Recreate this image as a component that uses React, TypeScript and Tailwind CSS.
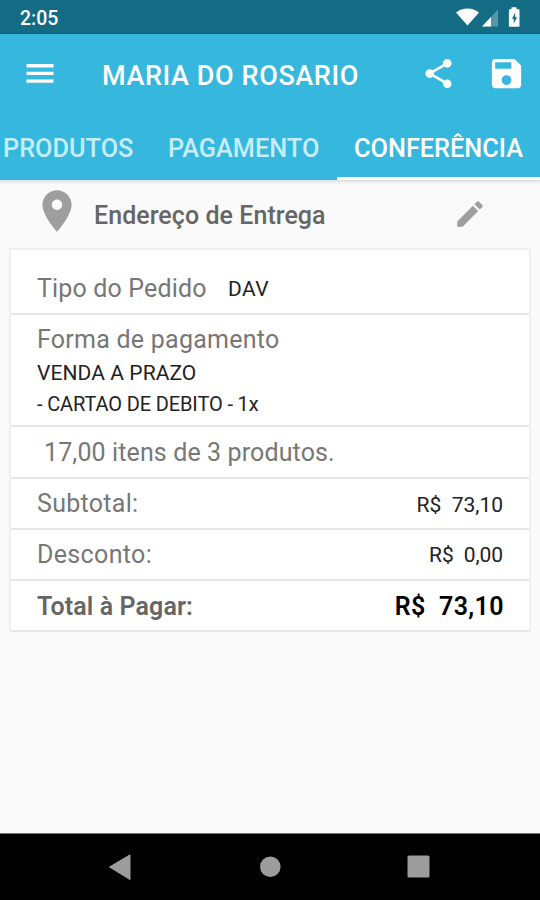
import type { ReactNode } from "react";

function Icon({ d, className }: { d: string; className: string }) {
  return (
    <svg viewBox="0 0 24 24" fill="currentColor" className={"shrink-0 " + className}>
      <path d={d} />
    </svg>
  );
}

const MENU = "M3 17.9h18v-2.2H3v2.2zm0-5.2h18v-2.2H3v2.2zm0-7.3v2.2h18V5.4H3z";
const SHARE =
  "M18 16.08c-.76 0-1.44.3-1.96.77L8.91 12.7c.05-.23.09-.46.09-.7s-.04-.47-.09-.7l7.05-4.11c.54.5 1.25.81 2.04.81 1.66 0 3-1.34 3-3s-1.34-3-3-3-3 1.34-3 3c0 .24.04.47.09.7L8.04 9.81C7.5 9.31 6.79 9 6 9c-1.66 0-3 1.34-3 3s1.34 3 3 3c.79 0 1.5-.31 2.04-.81l7.12 4.16c-.05.21-.08.43-.08.65 0 1.61 1.31 2.92 2.92 2.92s2.92-1.31 2.92-2.92-1.31-2.92-2.92-2.92z";
const SAVE =
  "M17 3H5c-1.11 0-2 .9-2 2v14c0 1.1.89 2 2 2h14c1.1 0 2-.9 2-2V7l-4-4zm-5 16c-1.66 0-3-1.34-3-3s1.34-3 3-3 3 1.34 3 3-1.34 3-3 3zm3-10H5V5h10v4z";
const PLACE =
  "M12 2C8.13 2 5 5.13 5 9c0 5.25 7 13 7 13s7-7.75 7-13c0-3.87-3.13-7-7-7zm0 9.5c-1.38 0-2.5-1.12-2.5-2.5s1.12-2.5 2.5-2.5 2.5 1.12 2.5 2.5-1.12 2.5-2.5 2.5z";
const EDIT =
  "M3 17.25V21h3.75L17.81 9.94l-3.75-3.75L3 17.25zM20.71 7.04c.39-.39.39-1.02 0-1.41l-2.34-2.34c-.39-.39-1.02-.39-1.41 0l-1.83 1.83 3.75 3.75 1.83-1.83z";

function StatusBar() {
  return (
    <div className="flex h-[34px] items-start justify-between border-b border-[#0c6079] bg-[#146b84] pl-5 text-white">
      <span className="mt-[7px] text-[19.5px] leading-6 font-medium">2:05</span>
      <svg viewBox="0 0 85 34" className="h-[34px] w-[85px] shrink-0">
        <path d="M1 12.6C7.6 7 17.4 7 24 12.6L12.5 25.6z" fill="#fff" />
        <path d="M43 9.5v17H27z" fill="#5797a9" />
        <path d="M36 17v9.5h-9z" fill="#fff" />
        <path d="M56.5 7.2h5v2h2.2q.8 0 .8.8v16q0 .8-.8.8h-9q-.8 0-.8-.8V10q0-.8.8-.8h1.8z" fill="#fff" />
        <path d="M60.2 12.5l-3.2 6.2h1.8v4.8l3.2-6.2h-1.8z" fill="#146b84" />
      </svg>
    </div>
  );
}

function Toolbar() {
  return (
    <div className="flex h-[79px] items-center pl-[22px] text-white">
      <Icon d={MENU} className="h-9 w-9" />
      <h1 className="ml-11 w-[319px] pt-[4px] text-[27px] leading-8 font-medium tracking-[0.6px] whitespace-nowrap">
        MARIA DO ROSARIO
      </h1>
      <Icon d={SHARE} className="h-[35px] w-[35px]" />
      <Icon d={SAVE} className="ml-[31px] h-[39px] w-[39px]" />
    </div>
  );
}

function Tabs() {
  return (
    <div className="flex h-[67px] text-[25.3px] leading-8 font-medium whitespace-nowrap text-[#c5edfb]">
      <div className="w-[151px] pt-5 pl-[3px]">PRODUTOS</div>
      <div className="w-[186px] pt-5 pl-[17px]">PAGAMENTO</div>
      <div className="w-[203px] border-b-[3px] border-white pt-5 pl-[17px] text-white">CONFERÊNCIA</div>
    </div>
  );
}

function Row({ className, children }: { className: string; children: ReactNode }) {
  return (
    <div className={"flex items-center justify-between border-b-2 border-[#e8e7e8] pr-[26px] pl-[26px] whitespace-nowrap " + className}>
      {children}
    </div>
  );
}

export default function App() {
  return (
    <div className="flex h-[900px] w-[540px] flex-col overflow-hidden bg-[#fafafa] font-['Roboto',sans-serif]">
      <StatusBar />
      <header className="bg-[#36b8de]">
        <Toolbar />
        <Tabs />
      </header>
      <div className="h-1 shrink-0 bg-linear-to-b from-[#dedede] to-[#fafafa]" />
      <main className="flex-1 px-[9px]">
        <div className="flex h-16 pt-0.5 text-[#9e9e9e]">
          <Icon d={PLACE} className="ml-[23px] h-[50px] w-[50px]" />
          <h2 className="mt-[14px] ml-3 w-[359px] text-[25px] leading-8 font-medium tracking-[0.05px] text-[#666]">Endereço de Entrega</h2>
          <Icon d={EDIT} className="mt-[11px] h-[34px] w-[34px]" />
        </div>
        <section className="w-[522px] border-x-2 border-t-2 border-[#efefef] bg-white text-[25px] leading-8 tracking-[0.2px] text-[#777]">
          <Row className="h-[65px] pt-[15px]">
            <div className="flex">
              <span className="w-[191px] tracking-[0.15px]">Tipo do Pedido</span>
              <span className="text-[21px] tracking-[0.4px] text-[#222]">DAV</span>
            </div>
          </Row>
          <div className="h-[112px] border-b-2 border-[#e8e7e8] pt-[9px] pl-[26px]">
            <div className="leading-8 tracking-[0.25px]">Forma de pagamento</div>
            <div className="mt-0.5 leading-[31px] text-[#222]">
              <div className="text-[21px] tracking-[0.08px]">VENDA A PRAZO</div>
              <div className="text-[20px] tracking-[-0.13px]">- CARTAO DE DEBITO - 1x</div>
            </div>
          </div>
          <Row className="h-[52px] pt-px"><span className="pl-[7px] tracking-[0.12px]">17,00 itens de 3 produtos.</span></Row>
          <Row className="h-[51px]">
            <span className="tracking-[0.3px]">Subtotal:</span>
            <span className="pt-[2px] text-[21px] tracking-[0px] whitespace-pre text-[#222]">{"R$  73,10"}</span>
          </Row>
          <Row className="h-[51px] pt-px">
            <span className="tracking-[0.35px]">Desconto:</span>
            <span className="text-[21px] tracking-[-0.1px] whitespace-pre text-[#222]">{"R$  0,00"}</span>
          </Row>
          <Row className="h-[51px] pt-0.5">
            <span className="font-semibold tracking-[0.1px] text-[#666]">Total à Pagar:</span>
            <span className="-mr-px font-semibold tracking-[0.4px] whitespace-pre text-black">{"R$  73,10"}</span>
          </Row>
        </section>
      </main>
      <nav className="flex h-[67px] shrink-0 border-t border-[#777] bg-black">
        <svg viewBox="0 0 540 66" className="h-[66px] w-[540px]" fill="#9c9c9c">
          <path d="M109.5 33L130 20.8v24.8z" stroke="#9c9c9c" strokeLinejoin="round" />
          <circle cx="270.3" cy="32.8" r="10.3" />
          <rect x="407.5" y="21.5" width="22" height="22" rx="1.5" />
        </svg>
      </nav>
    </div>
  );
}
